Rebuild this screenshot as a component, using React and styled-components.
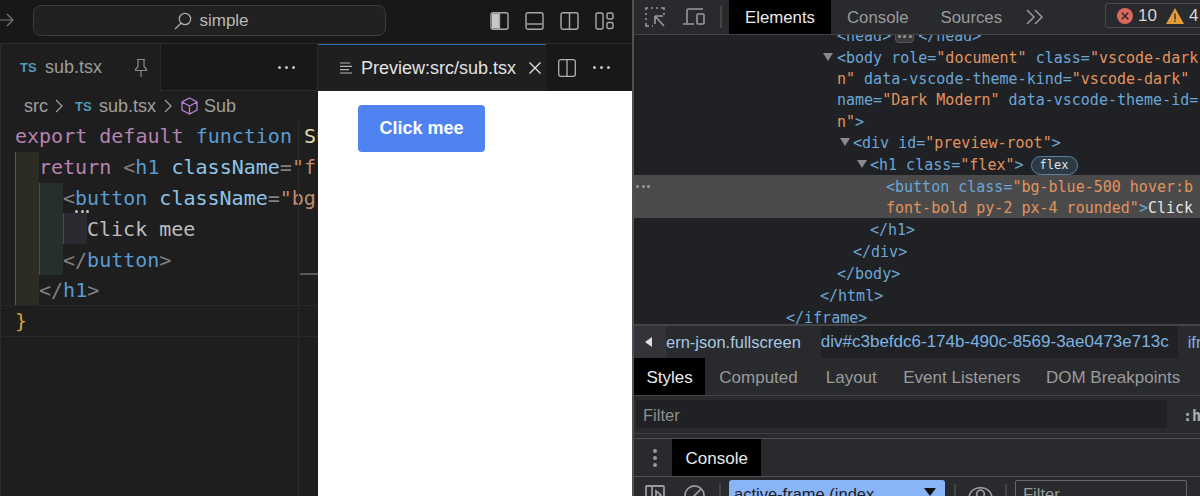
import React from "react";
import styled, { createGlobalStyle } from "styled-components";

const Global = createGlobalStyle`
  html, body { margin: 0; padding: 0; background: #181818; }
  body { width: 1200px; height: 496px; overflow: hidden; font-family: "Liberation Sans", Arial, sans-serif; }
  * { box-sizing: border-box; }
`;

const Page = styled.div`
  display: flex;
  width: 1200px;
  height: 496px;
  overflow: hidden;
`;
const Glyph = styled.svg`
  flex: none;
  margin-left: ${(p) => p.$ml ?? 0}px;
  margin-right: ${(p) => p.$mr ?? 0}px;
  margin-top: ${(p) => p.$mt ?? 0}px;
`;

/* ---------- VS Code side ---------- */
const Workbench = styled.div`
  width: 632px;
  flex: none;
  display: flex;
  flex-direction: column;
  background: #181818;
`;
const TitleBar = styled.div`
  height: 44px;
  flex: none;
  display: flex;
  align-items: flex-start;
  padding: 5px 0 0 0;
  border-bottom: 1px solid #2b2b2b;
  color: #b5b5b5;
`;
const SearchBox = styled.div`
  width: 353px;
  height: 31px;
  flex: none;
  display: flex;
  align-items: center;
  justify-content: center;
  gap: 7px;
  padding: 1px 0 0 4px;
  border: 1px solid #3c3c3c;
  border-radius: 8px;
  background: #212121;
  color: #b8b8b8;
  font-size: 17px;
`;
const LayoutIcons = styled.div`
  margin-left: 104px;
  padding-top: 6px;
  display: flex;
  gap: 16px;
`;
const Split = styled.div`
  flex: 1;
  display: flex;
  min-height: 0;
`;
const EditorPane = styled.div`
  width: 318px;
  flex: none;
  position: relative;
  display: flex;
  flex-direction: column;
  overflow: hidden;
  background: #1e1e1e;
  border-left: 1px solid #2b2b2b;
`;
const TabStrip = styled.div`
  height: 47px;
  flex: none;
  display: flex;
  align-items: stretch;
  background: #181818;
`;
const EditorTab = styled.div`
  width: 160px;
  flex: none;
  display: flex;
  align-items: center;
  padding-left: 19px;
  background: #1e1e1e;
  border-right: 1px solid #2b2b2b;
  color: #9d9d9d;
  font-size: 18px;
`;
const TsBadge = styled.span`
  color: #519aba;
  font-size: 13px;
  font-weight: 700;
  width: ${(p) => p.$w || 25}px;
  flex: none;
`;
const StripFill = styled.div`
  flex: 1;
  display: flex;
  align-items: center;
  justify-content: flex-end;
  padding-right: 22px;
  border-bottom: 1px solid #2b2b2b;
  border-right: 1px solid #2b2b2b;
`;
const Dots = styled.span`
  display: flex;
  gap: ${(p) => (p.$small ? 2.5 : 4)}px;
  & > i {
    width: 3px;
    height: 3px;
    border-radius: 50%;
    background: ${(p) => p.$color || "#c4c4c4"};
  }
`;
const Crumbs = styled.div`
  height: 30px;
  flex: none;
  display: flex;
  align-items: center;
  padding-left: 23px;
  color: #a0a0a0;
  font-size: 18px;
`;
const Code = styled.div`
  font-family: "DejaVu Sans Mono", monospace;
  font-size: 20px;
  white-space: pre;
  color: #bdbdbd;
`;
const Line = styled.div`
  height: 30.8px;
  display: flex;
  padding-left: 14px;
  align-items: center;
  border-bottom: ${(p) => (p.$rule ? "1px solid #282828" : "none")};
`;
const Guide = styled.span`
  width: 24px;
  align-self: stretch;
  flex: none;
  background: ${(p) => p.$bg};
  border-left: 1px solid ${(p) => p.$edge || "transparent"};
`;
const Kw = styled.span`color: #b583b0;`;
const Blue = styled.span`color: #5a9bd0;`;
const Attr = styled.span`color: #8fc4e6;`;
const Gray = styled.span`color: #808080;`;
const Str = styled.span`color: #c08a6c;`;
const Brace = styled.span`color: #d9a13f;`;
const Fn = styled.span`color: #dcdcaa;`;
const CodeEdge = styled.div`
  position: absolute;
  left: 297px;
  top: 77px;
  bottom: 0;
  width: 21px;
  border-left: 1px solid #2a2a2a;
  &::after {
    content: "";
    position: absolute;
    left: 1px;
    right: 0;
    top: 152px;
    height: 2px;
    background: #5a5a5a;
  }
`;
const HoverDots = styled.span`
  position: absolute;
  left: 74px;
  top: 166px;
`;
const PreviewPane = styled.div`
  flex: 1;
  display: flex;
  flex-direction: column;
  background: #fff;
`;
const PreviewStrip = styled.div`
  height: 47px;
  flex: none;
  display: flex;
  align-items: center;
  background: #181818;
  color: #b5b5b5;
`;
const PreviewTab = styled.div`
  width: 228px;
  height: 100%;
  flex: none;
  display: flex;
  align-items: center;
  padding-left: 22px;
  background: #1f1f1f;
  border-top: 1px solid #2c6cb0;
  color: #e2e2e2;
  font-size: 18px;
  white-space: nowrap;
`;
const PreviewBody = styled.div`
  flex: 1;
  padding: 14px 0 0 40px;
`;
const BlueButton = styled.div`
  width: 127px;
  height: 47px;
  display: flex;
  align-items: center;
  justify-content: center;
  border-radius: 4px;
  background: #4f83f1;
  color: #fff;
  font-size: 18px;
  font-weight: 700;
`;

/* ---------- DevTools side ---------- */
const DevTools = styled.div`
  flex: 1;
  min-width: 0;
  display: flex;
  flex-direction: column;
  background: #202124;
  border-left: 2px solid #515151;
  overflow: hidden;
`;
const TopBar = styled.div`
  height: 35px;
  flex: none;
  display: flex;
  align-items: stretch;
  background: #292a2d;
  border-bottom: 1px solid #444;
  color: #a0a0a0;
  font-size: 16.8px;
  white-space: nowrap;
`;
const ToolIcons = styled.div`
  width: 95px;
  flex: none;
  display: flex;
  align-items: center;
  gap: 17px;
  padding-left: 11px;
`;
const VDivider = styled.span`
  width: 2px;
  height: ${(p) => p.$h || 22}px;
  background: #444;
  flex: none;
  margin-left: ${(p) => p.$l ?? 0}px;
  margin-top: ${(p) => p.$t ?? 0}px;
`;
const PanelTab = styled.div`
  display: flex;
  align-items: center;
  flex: none;
  background: ${(p) => (p.$active ? "#000" : "transparent")};
  color: ${(p) => (p.$active ? "#eaeaea" : "#9b9b9b")};
  padding: 2px ${(p) => p.$pad || 16}px 0 ${(p) => p.$padL || p.$pad || 16}px;
`;
const Counts = styled.div`
  align-self: flex-start;
  margin-top: 3px;
  width: 110px;
  height: 25px;
  flex: none;
  display: flex;
  align-items: center;
  padding-left: 11px;
  gap: 5px;
  border: 1px solid #4a4a4a;
  border-radius: 3px;
  color: #d5d5d5;
  font-size: 17px;
`;
const DomTree = styled.div`
  height: 289px;
  flex: none;
  overflow: hidden;
  font-family: "DejaVu Sans Mono", monospace;
  font-size: 15px;
  color: #6ba6d6;
  white-space: pre;
`;
const DomInner = styled.div`
  margin-top: -11px;
`;
const DomLine = styled.div`
  height: ${(p) => (p.$wrap ? 21.3 : 22)}px;
  padding: 2px 0 0 ${(p) => p.$x}px;
  background: ${(p) => (p.$sel ? "#4a4a4a" : "transparent")};
  position: relative;
  display: flex;
  align-items: center;
`;
const Val = styled.span`color: #e0935f;`;
const Txt = styled.span`color: #e6e6e6;`;
const Tri = styled.span`
  position: absolute;
  left: ${(p) => p.$x}px;
  top: 7px;
  width: 0;
  height: 0;
  border-left: 5px solid transparent;
  border-right: 5px solid transparent;
  border-top: 8px solid #8a8a8a;
`;
const Ellipsis = styled.span`
  width: 19px;
  height: 14px;
  margin: 0 4px;
  display: flex;
  align-items: center;
  justify-content: center;
  border: 1px solid #555;
  border-radius: 4px;
  background: #3a3a3a;
`;
const FlexPill = styled.span`
  margin-left: 7px;
  height: 19px;
  width: 47px;
  display: flex;
  align-items: center;
  justify-content: center;
  border: 1px solid #5a7fa0;
  border-radius: 10px;
  background: #2c3a46;
  color: #dfe6ec;
  font-size: 12px;
`;
const RowDots = styled.span`
  position: absolute;
  left: 2px;
  top: 10px;
`;
const Path = styled.div`
  height: 34px;
  flex: none;
  display: flex;
  align-items: stretch;
  background: #292a2d;
  border-top: 2px solid #444;
  color: #a8c7e0;
  font-size: 16.5px;
  white-space: nowrap;
`;
const PathBack = styled.div`
  width: 32px;
  flex: none;
  background: #33343a;
  display: flex;
  align-items: center;
  padding-left: 11px;
  &::before {
    content: "";
    border-top: 5px solid transparent;
    border-bottom: 5px solid transparent;
    border-right: 7px solid #e0e0e0;
  }
`;
const PathItem = styled.div`
  display: flex;
  align-items: center;
  flex: none;
  padding: 0 ${(p) => p.$r ?? 10}px 0 ${(p) => p.$l ?? 10}px;
  background: ${(p) => (p.$hover ? "#202124" : "transparent")};
  color: ${(p) => p.$color || "#a8c7e0"};
  font-size: ${(p) => p.$size || 16.5}px;
`;
const SubTabs = styled.div`
  height: 38px;
  flex: none;
  display: flex;
  align-items: stretch;
  background: #292a2d;
  border-bottom: 1px solid #444;
  font-size: 17px;
  white-space: nowrap;
`;
const FilterRow = styled.div`
  height: 38px;
  flex: none;
  display: flex;
  align-items: flex-start;
  background: #292a2d;
  border-bottom: 1px solid #3e3e3e;
  padding: 4px 0 0 2px;
  font-size: 16.5px;
`;
const FilterInput = styled.div`
  width: 531px;
  height: 28px;
  flex: none;
  display: flex;
  align-items: center;
  padding: 2px 0 0 7px;
  background: #202124;
  color: #8e8e8e;
`;
const Hov = styled.span`
  margin: 7px 0 0 16px;
  color: #b0b0b0;
  font-weight: 700;
  font-family: "DejaVu Sans Mono", monospace;
  font-size: 15px;
`;
const Sliver = styled.div`
  height: 5px;
  flex: none;
  background: #292a2d;
  border-bottom: 1px solid #505050;
`;
const DrawerTabs = styled.div`
  height: 38px;
  flex: none;
  display: flex;
  align-items: stretch;
  background: #292a2d;
  border-bottom: 1px solid #505050;
  font-size: 17px;
`;
const Kebab = styled.div`
  width: 38px;
  flex: none;
  display: flex;
  flex-direction: column;
  align-items: center;
  justify-content: center;
  gap: 3px;
  padding-left: 4px;
  & > i {
    width: 4px;
    height: 4px;
    border-radius: 50%;
    background: #9a9a9a;
  }
`;
const ConsoleBar = styled.div`
  flex: 1;
  display: flex;
  align-items: flex-start;
  padding: 3px 0 0 11px;
  background: #292a2d;
  overflow: hidden;
`;
const ContextSelect = styled.div`
  width: 216px;
  height: 30px;
  flex: none;
  display: flex;
  justify-content: space-between;
  padding: 5px 9px 0 5px;
  border-radius: 3px;
  background: #8ab4f8;
  color: #202124;
  font-size: 16.5px;
  margin: 0 9px 0 8px;
  &::after {
    content: "";
    margin-top: 3px;
    height: 0;
    border-left: 6px solid transparent;
    border-right: 6px solid transparent;
    border-top: 8px solid #111;
  }
`;
const ConsoleFilter = styled.div`
  width: 172px;
  height: 30px;
  flex: none;
  margin-left: 8px;
  padding: 4px 0 0 7px;
  border: 1px solid #666;
  border-radius: 2px;
  color: #9a9a9a;
  font-size: 16.5px;
`;

const TriDots = ({ color, small }) => (
  <Dots $color={color} $small={small}><i /><i /><i /></Dots>
);

const Ch = ({ before, after }) => (
  <Glyph $ml={before} $mr={after} width="8" height="14" viewBox="0 0 8 14" fill="none" stroke="#a0a0a0" strokeWidth="1.2">
    <path d="M1 1l6 6-6 6" />
  </Glyph>
);

const PanelIcon = ({ kind }) => (
  <Glyph width="19" height="20" viewBox="0 0 19 20" fill="none" stroke="#a8a8a8" strokeWidth="1.4">
    {kind === "side" && <path d="M2 2.500h7.500v15H2z" fill="#c8c8c8" stroke="none" />}
    <rect x="1" y="1.700" width="17" height="16.600" rx="2" />
    {kind === "side" && <path d="M9.500 2v16" />}
    {kind === "panel" && <path d="M1.500 13h16" />}
    {kind === "split" && <path d="M9.500 2v16" />}
  </Glyph>
);

export default function App() {
  return (
    <Page>
      <Global />
      <Workbench>
        <TitleBar>
          <Glyph $mt={8} $mr={19} width="14" height="14" viewBox="0 0 14 14" fill="none" stroke="#7a7a7a" strokeWidth="1.2">
            <path d="M0 7h13M7 1l6 6-6 6" />
          </Glyph>
          <SearchBox>
            <Glyph width="18" height="18" viewBox="0 0 18 18" fill="none" stroke="#b0b0b0" strokeWidth="1.2">
              <circle cx="11" cy="7" r="5.700" />
              <path d="M7 11.200L1 17" />
            </Glyph>
            simple
          </SearchBox>
          <LayoutIcons>
            <PanelIcon kind="side" />
            <PanelIcon kind="panel" />
            <PanelIcon kind="split" />
            <Glyph width="19" height="20" viewBox="0 0 19 20" fill="none" stroke="#a8a8a8" strokeWidth="1.4">
              <rect x="1" y="2" width="7" height="16" rx="1.500" />
              <rect x="12" y="2" width="6" height="6" rx="1.500" />
              <rect x="12" y="11.500" width="6" height="6" rx="1.500" />
            </Glyph>
          </LayoutIcons>
        </TitleBar>
        <Split>
          <EditorPane>
            <TabStrip>
              <EditorTab>
                <TsBadge>TS</TsBadge>
                sub.tsx
                <Glyph $ml={31} width="16" height="20" viewBox="0 0 16 20" fill="none" stroke="#8a8a8a" strokeWidth="1.2">
                  <path d="M4 1.500h8M5 1.500v7L2.500 11.500v1h11v-1L11 8.500v-7M8 12.500V19" />
                </Glyph>
              </EditorTab>
              <StripFill><TriDots /></StripFill>
            </TabStrip>
            <Crumbs>
              src
              <Ch before={7} after={12} />
              <TsBadge $w={24}>TS</TsBadge>
              sub.tsx
              <Ch before={8} after={9} />
              <Glyph $mr={6} width="17" height="18" viewBox="0 0 17 18" fill="none" stroke="#b180d7" strokeWidth="1.3">
                <path d="M8.500 1L16 5v8l-7.500 4L1 13V5zM1 5l7.500 4L16 5M8.500 9v8" />
              </Glyph>
              Sub
            </Crumbs>
            <Code>
              <Line>
                <Kw>export default </Kw><Blue>function </Blue><Fn>Sub</Fn>
              </Line>
              <Line>
                <Guide $bg="#2c2c22" $edge="#5a5a4a" />
                <Kw>return </Kw><Gray>&lt;</Gray><Blue>h1 </Blue><Attr>className</Attr><Gray>=</Gray><Str>"flex"</Str>
              </Line>
              <Line>
                <Guide $bg="#2c2c22" $edge="#5a5a4a" />
                <Guide $bg="#26302a" $edge="#4a4f4a" />
                <Gray>&lt;</Gray><Blue>button </Blue><Attr>className</Attr><Gray>=</Gray><Str>"bg-blue"</Str>
              </Line>
              <Line>
                <Guide $bg="#2c2c22" $edge="#5a5a4a" />
                <Guide $bg="#26302a" $edge="#4a4f4a" />
                <Guide $bg="#2b2a31" $edge="#4a4a50" />
                Click mee
              </Line>
              <Line>
                <Guide $bg="#2c2c22" $edge="#5a5a4a" />
                <Guide $bg="#26302a" $edge="#4a4f4a" />
                <Gray>&lt;/</Gray><Blue>button</Blue><Gray>&gt;</Gray>
              </Line>
              <Line $rule>
                <Guide $bg="#2c2c22" $edge="#5a5a4a" />
                <Gray>&lt;/</Gray><Blue>h1</Blue><Gray>&gt;</Gray>
              </Line>
              <Line $rule><Brace>{"}"}</Brace></Line>
            </Code>
            <CodeEdge />
            <HoverDots><TriDots small /></HoverDots>
          </EditorPane>
          <PreviewPane>
            <PreviewStrip>
              <PreviewTab>
                <Glyph $mr={8} width="13" height="12" viewBox="0 0 13 12" stroke="#b5b5b5" strokeWidth="1.2">
                  <path d="M0 1h10M0 4.300h12M0 7.600h9M0 11h12" />
                </Glyph>
                Preview:src/sub.tsx
                <Glyph $ml={13} width="12" height="12" viewBox="0 0 12 12" stroke="#e0e0e0" strokeWidth="1.4">
                  <path d="M.5.5l11 11M11.500.5l-11 11" />
                </Glyph>
              </PreviewTab>
              <Glyph $ml={12} $mr={17} width="18" height="18" viewBox="0 0 18 18" fill="none" stroke="#b0b0b0" strokeWidth="1.3">
                <rect x=".7" y=".7" width="16.600" height="16.600" rx="2" />
                <path d="M9 1v16" />
              </Glyph>
              <TriDots />
            </PreviewStrip>
            <PreviewBody>
              <BlueButton>Click mee</BlueButton>
            </PreviewBody>
          </PreviewPane>
        </Split>
      </Workbench>

      <DevTools>
        <TopBar>
          <ToolIcons>
            <Glyph width="21" height="21" viewBox="0 0 21 21" fill="none" stroke="#9a9a9a" strokeWidth="1.6">
              <path d="M1 3V1h2M6 1h2M11 1h2M16 1h3v2M19 6v2M1 6v2M1 11v2M1 16v3h3M7 19h1" />
              <path d="M10 9h8M10 9v8M10 9l9 10" />
            </Glyph>
            <Glyph width="23" height="19" viewBox="0 0 23 19" fill="none" stroke="#9a9a9a" strokeWidth="1.6">
              <path d="M4 15V2.500Q4 1 5.500 1H20M0 16h11" />
              <rect x="14" y="6" width="7" height="10" rx="1" />
            </Glyph>
            <VDivider $h={22} $l={-3} />
          </ToolIcons>
          <PanelTab $active>Elements</PanelTab>
          <PanelTab>Console</PanelTab>
          <PanelTab>Sources</PanelTab>
          <Glyph $ml={8} $mr={61} $mt={9} width="18" height="16" viewBox="0 0 18 16" fill="none" stroke="#9a9a9a" strokeWidth="1.5">
            <path d="M1 1l7 7-7 7M9 1l7 7-7 7" />
          </Glyph>
          <Counts>
            <Glyph width="16" height="16" viewBox="0 0 16 16">
              <circle cx="8" cy="8" r="8" fill="#d9675c" />
              <path d="M4.800 4.800l6.400 6.400M11.200 4.800l-6.400 6.400" stroke="#2a2a2a" strokeWidth="1.5" />
            </Glyph>
            10
            <Glyph $ml={4} width="18" height="16" viewBox="0 0 18 16">
              <path d="M9 0L18 16H0z" fill="#e59a3c" />
              <path d="M9 5.500v6M9 12.500v1.500" stroke="#2a2a2a" strokeWidth="1.300" />
            </Glyph>
            4
          </Counts>
        </TopBar>

        <DomTree>
          <DomInner>
            <DomLine $x={203}>
              {"<head>"}<Ellipsis><TriDots small color="#9a9a9a" /></Ellipsis>{"</head>"}
            </DomLine>
            <DomLine $x={203} $wrap>
              <Tri $x={189} />
              {"<body role="}<Val>"document"</Val>{" class="}<Val>"vscode-dark</Val>
            </DomLine>
            <DomLine $x={203} $wrap>
              <Val>n"</Val>{" data-vscode-theme-kind="}<Val>"vscode-dark"</Val>
            </DomLine>
            <DomLine $x={203} $wrap>
              {"name="}<Val>"Dark Modern"</Val>{" data-vscode-theme-id="}
            </DomLine>
            <DomLine $x={203} $wrap>
              <Val>n"</Val>{">"}
            </DomLine>
            <DomLine $x={219}>
              <Tri $x={206} />
              {"<div id="}<Val>"preview-root"</Val>{">"}
            </DomLine>
            <DomLine $x={236}>
              <Tri $x={223} />
              {"<h1 class="}<Val>"flex"</Val>{">"}
              <FlexPill>flex</FlexPill>
            </DomLine>
            <DomLine $x={252} $sel $wrap>
              <RowDots><TriDots small color="#9a9a9a" /></RowDots>
              {"<button class="}<Val>"bg-blue-500 hover:b</Val>
            </DomLine>
            <DomLine $x={252} $sel $wrap>
              <Val>font-bold py-2 px-4 rounded"</Val>{">"}<Txt>Click</Txt>
            </DomLine>
            <DomLine $x={236}>{"</h1>"}</DomLine>
            <DomLine $x={219}>{"</div>"}</DomLine>
            <DomLine $x={203}>{"</body>"}</DomLine>
            <DomLine $x={186}>{"</html>"}</DomLine>
            <DomLine $x={152}>{"</iframe>"}</DomLine>
          </DomInner>
        </DomTree>

        <Path>
          <PathBack />
          <PathItem $l={0} $r={20}>ern-json.fullscreen</PathItem>
          <PathItem $hover $l={0} $r={9} $size={17} $color="#7db3e0">
            div#c3befdc6-174b-490c-8569-3ae0473e713c
          </PathItem>
          <PathItem $color="#7db3e0">iframe</PathItem>
        </Path>

        <SubTabs>
          <PanelTab $active $pad={12.5}>Styles</PanelTab>
          <PanelTab $pad={14}>Computed</PanelTab>
          <PanelTab $pad={14}>Layout</PanelTab>
          <PanelTab $pad={12.5}>Event Listeners</PanelTab>
          <PanelTab $pad={13}>DOM Breakpoints</PanelTab>
        </SubTabs>

        <FilterRow>
          <FilterInput>Filter</FilterInput>
          <Hov>:hov</Hov>
        </FilterRow>
        <Sliver />

        <DrawerTabs>
          <Kebab><i /><i /><i /></Kebab>
          <PanelTab $active $pad={13.5}>Console</PanelTab>
        </DrawerTabs>

        <ConsoleBar>
          <Glyph $mr={19} $mt={5} width="20" height="20" viewBox="0 0 20 20" fill="none" stroke="#9a9a9a" strokeWidth="1.8">
            <rect x="1" y="1" width="18" height="18" rx="1" />
            <path d="M7 1v18M11 6l5 4-5 4z" />
          </Glyph>
          <Glyph $mr={14} $mt={5} width="21" height="21" viewBox="0 0 22 22" fill="none" stroke="#9a9a9a" strokeWidth="1.8">
            <circle cx="11" cy="11" r="10" />
            <path d="M4 18L18 4" />
          </Glyph>
          <VDivider $h={20} $t={4} />
          <ContextSelect>active-frame (index</ContextSelect>
          <VDivider $h={20} $t={4} />
          <Glyph $ml={12} $mr={12} $mt={5} width="25" height="22" viewBox="0 0 26 22" fill="none" stroke="#9a9a9a" strokeWidth="1.8">
            <path d="M1 12C3 -1 23 -1 25 12" />
            <circle cx="13" cy="9" r="4" />
          </Glyph>
          <VDivider $h={20} $t={4} />
          <ConsoleFilter>Filter</ConsoleFilter>
        </ConsoleBar>
      </DevTools>
    </Page>
  );
}
